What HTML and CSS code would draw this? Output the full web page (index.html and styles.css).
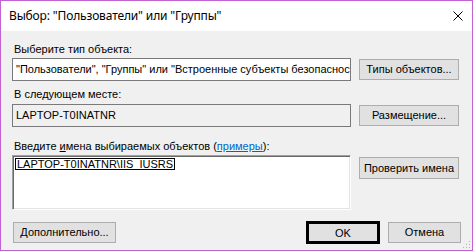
FILE: index.html
```html
<!DOCTYPE html>
<html lang="ru">
<head>
    <meta charset="UTF-8">
    <title>Выбор: "Пользователи" или "Группы"</title>
    <link rel="stylesheet" href="styles.css">
</head>
<body>
    <div class="dialog">
        <div class="titlebar">
            <span class="title">Выбор: "Пользователи" или "Группы"</span>
            <svg class="close" width="10" height="10" viewBox="0 0 10 10">
                <path d="M0.5 0.5 L9.5 9.5 M9.5 0.5 L0.5 9.5" stroke="#000" stroke-width="1" fill="none"/>
            </svg>
        </div>
        <div class="content">
            <div class="label first">Выберите тип объекта:</div>
            <div class="row">
                <div class="edit white">"Пользователи", "Группы" или "Встроенные субъекты безопасности"</div>
                <button class="btn">Типы объектов...</button>
            </div>

            <div class="label second">В следующем месте:</div>
            <div class="row">
                <div class="edit">LAPTOP-T0INATNR</div>
                <button class="btn">Размещение...</button>
            </div>

            <div class="label third">Введите <u>и</u>мена выбираемых объектов (<a href="#" class="link">примеры</a>):</div>
            <div class="row top">
                <div class="memo"><span class="name">LAPTOP-T0INATNR\IIS_IUSRS</span></div>
                <button class="btn check">Проверить имена</button>
            </div>

            <div class="footer">
                <button class="btn more">Дополнительно...</button>
                <div class="spacer"></div>
                <button class="btn ok">OK</button>
                <button class="btn cancel">Отмена</button>
            </div>

            <svg class="grip" width="9" height="9" viewBox="0 0 9 9">
                <rect x="7" y="1" width="1" height="1" fill="#b4b4b4"/>
                <rect x="4" y="4" width="1" height="1" fill="#b4b4b4"/>
                <rect x="7" y="4" width="1" height="1" fill="#b4b4b4"/>
                <rect x="1" y="7" width="1" height="1" fill="#b4b4b4"/>
                <rect x="4" y="7" width="1" height="1" fill="#b4b4b4"/>
                <rect x="7" y="7" width="1" height="1" fill="#b4b4b4"/>
            </svg>
        </div>
    </div>
</body>
</html>
```

FILE: styles.css
```css
html, body {
    margin: 0;
    padding: 0;
}
body {
    font-family: "Liberation Sans", Arial, sans-serif;
    font-size: 11px;
    color: #000000;
    background-color: #f0f0f0;
}
.dialog {
    width: 473px;
    height: 251px;
    box-sizing: border-box;
    border: 1px solid #c062cf;
    display: flex;
    flex-direction: column;
    background-color: #f0f0f0;
}
.titlebar {
    height: 30px;
    background-color: #ffffff;
    display: flex;
    align-items: center;
    padding: 0 9px 0 8px;
}
.title {
    flex: 1;
    font-family: "Noto Sans", "Open Sans", sans-serif;
    font-size: 12px;
    letter-spacing: -0.15px;
    line-height: 16px;
}
.close {
    display: block;
}
.content {
    position: relative;
    flex: 1;
    padding: 10px 12px 0 11px;
}
.label {
    line-height: 16px;
    height: 16px;
    white-space: nowrap;
    padding-left: 2px;
}
.label.second {
    margin-top: 5px;
}
.label.third {
    margin-top: 11px;
}
.label u {
    text-decoration: underline;
}
.link {
    color: #0066cc;
    text-decoration: underline;
}
.row {
    display: grid;
    grid-template-columns: 339px 100px;
    column-gap: 8px;
    align-items: center;
    margin-top: 1px;
}
.row.top {
    align-items: start;
}
.label.second + .row {
    margin-top: 2px;
}
.edit {
    height: 23px;
    min-width: 0;
    box-sizing: border-box;
    border: 1px solid #7a7a7a;
    background-color: #f0f0f0;
    padding: 0 3px;
    line-height: 21px;
    white-space: nowrap;
    overflow: hidden;
}
.edit.white {
    background-color: #ffffff;
}
.memo {
    height: 55px;
    box-sizing: border-box;
    background-color: #ffffff;
    border-top: 1px solid #a0a0a0;
    border-left: 1px solid #a0a0a0;
    border-right: 1px solid #ffffff;
    border-bottom: 1px solid #ffffff;
    box-shadow: inset 1px 1px 0 #696969, inset -1px -1px 0 #e3e3e3;
    padding: 2px 0 0 2px;
}
.name {
    display: inline-block;
    border: 1px solid #000000;
    line-height: 10px;
    height: 10px;
    padding: 0 1px;
    white-space: nowrap;
}
.btn {
    font-family: inherit;
    font-size: 11px;
    color: #000000;
    background-color: #e1e1e1;
    border: 1px solid #adadad;
    height: 21px;
    padding: 0;
    margin: 0;
    line-height: 19px;
    white-space: nowrap;
}
.btn.check {
    height: 22px;
    margin-top: 2px;
}
.footer {
    display: flex;
    align-items: center;
    gap: 8px;
    margin-top: 10px;
    margin-right: -1px;
}
.spacer {
    flex: 1;
}
.more {
    width: 103px;
    margin-left: 1px;
}
.ok {
    width: 74px;
    height: 23px;
    border: 3px solid #000000;
    margin-top: 1px;
}
.cancel {
    width: 73px;
}
.grip {
    position: absolute;
    right: 1px;
    bottom: 1px;
}
```
